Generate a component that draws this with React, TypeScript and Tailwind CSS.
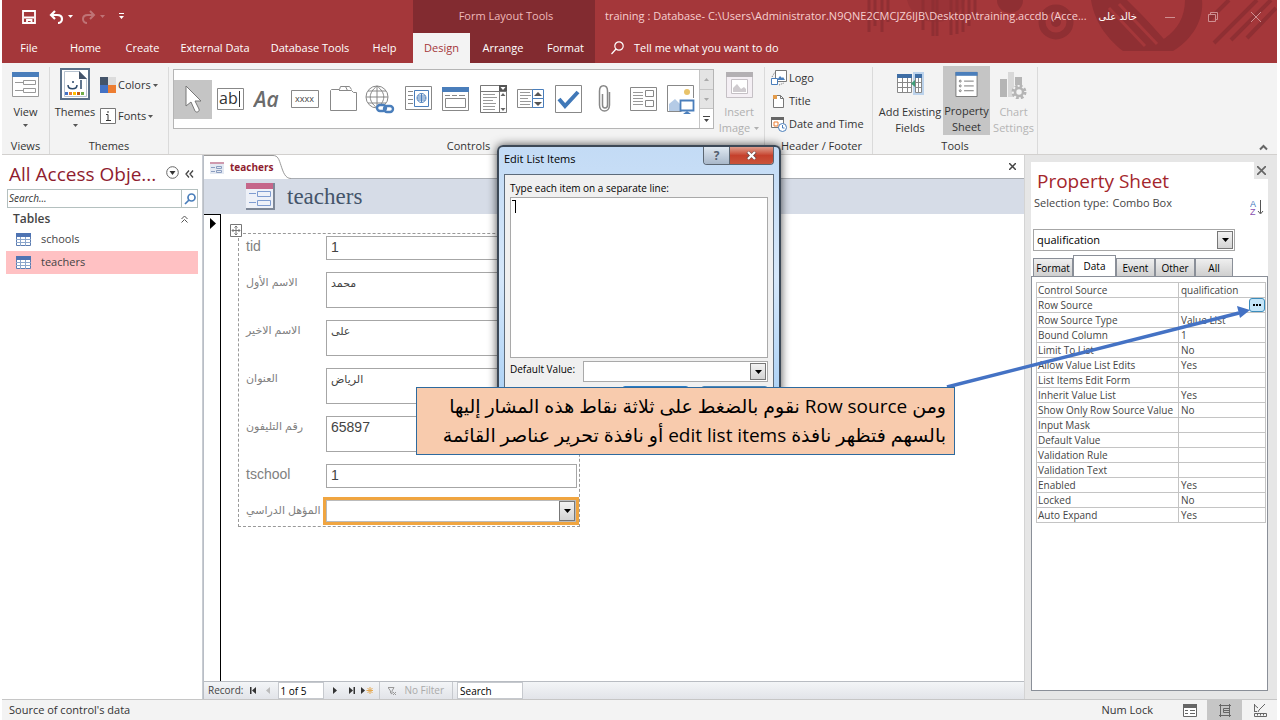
import React, { useState } from 'react';

interface Field {
  label: string;
  value: string;
  tall?: boolean;
}

const menuTabs = [
  { name: 'File', width: 'w-[54px]' },
  { name: 'Home', width: 'w-[59px]' },
  { name: 'Create', width: 'w-[55px]' },
  { name: 'External Data', width: 'w-[90px]' },
  { name: 'Database Tools', width: 'w-[100px]' },
  { name: 'Help', width: 'w-[49px]' },
];

const fields: Field[] = [
  { label: 'tid', value: '1' },
  { label: 'الاسم الأول', value: 'محمد', tall: true },
  { label: 'الاسم الاخير', value: 'على', tall: true },
  { label: 'العنوان', value: 'الرياض', tall: true },
  { label: 'رقم التليفون', value: '65897', tall: true },
  { label: 'tschool', value: '1' },
];

const properties: [string, string][] = [
  ['Control Source', 'qualification'],
  ['Row Source', ''],
  ['Row Source Type', 'Value List'],
  ['Bound Column', '1'],
  ['Limit To List', 'No'],
  ['Allow Value List Edits', 'Yes'],
  ['List Items Edit Form', ''],
  ['Inherit Value List', 'Yes'],
  ['Show Only Row Source Value', 'No'],
  ['Input Mask', ''],
  ['Default Value', ''],
  ['Validation Rule', ''],
  ['Validation Text', ''],
  ['Enabled', 'Yes'],
  ['Locked', 'No'],
  ['Auto Expand', 'Yes'],
];

const isArabic = (text: string) => /[\u0600-\u06ff]/.test(text);

const Caret: React.FC<{ className?: string }> = ({ className = 'text-[#555]' }) => (
  <svg width="5" height="3" viewBox="0 0 5 3" className={`shrink-0 ${className}`}>
    <path d="M0 0h5L2.500 3z" fill="currentColor" />
  </svg>
);

// the darker arrow inside a combo box button
const ComboArrow = () => (
  <span className="flex w-4 items-center justify-center border border-[#777] bg-linear-to-b from-[#f2f2f2] to-[#d4d4d4]">
    <svg width="7" height="4" viewBox="0 0 7 4"><path d="M0 0h7L3.500 4z" /></svg>
  </span>
);

/* ---------- title bar ---------- */

const TitlePattern = () => (
  <svg width="420" height="52" viewBox="0 0 420 52" className="absolute top-0 right-0" fill="none" stroke="#8f2f33">
    <path d="M12 0v32M18 0v26M25 0v32M31 0v22" strokeWidth="3" />
    <path d="M50 0a30 30 0 0 0 58 0z" fill="#8f2f33" stroke="none" opacity=".5" />
    <path d="M66 0v30M76 0v36M80 0v36M94 0v35M100 0v34M106 0v32M112 0v26M118 0v20" strokeWidth="3" />
    <path d="M140 0a13 13 0 0 0 26 0z" fill="#8f2f33" stroke="none" />
    <circle cx="199" cy="22" r="14" strokeWidth="7" />
    <circle cx="199" cy="22" r="5" fill="#8f2f33" stroke="none" />
    <path d="M234 0c4 24 18 40 32 51h50c20-12 31-32 29-51h-17c0 17-8 30-20 38L270 0z" fill="#8f2f33" stroke="none" />
    <path d="M252 8l36 38M262 4l38 40M274 0l34 38" stroke="#a4373a" strokeWidth="3" />
    <path d="M352 20L372 0M357 43L400 0M374 40L414 0M390 38L419 8" strokeWidth="4" />
  </svg>
);

const TitleBar = () => (
  <div className="relative flex h-[33px] items-stretch">
    <div className="flex w-[411px] shrink-0 items-center pl-5">
      <button aria-label="Save">
        <svg width="14" height="14" viewBox="0 0 14 14" fill="none" stroke="#fff" strokeWidth="1.800">
          <path d="M1 1h12v12H1zM2 7.500h10M5 12.500v-2.500h4.500v2.500" />
        </svg>
      </button>
      <button aria-label="Undo" className="ml-[13px] flex items-center gap-1">
        <svg width="15" height="14" viewBox="0 0 15 14" fill="none" stroke="#fff" strokeWidth="2.200">
          <path d="M6 1L2 5l4 4M2 5h6c3 0 5 1.500 5 4s-2 4-4 4" />
        </svg>
        <Caret className="text-white" />
      </button>
      <button aria-label="Redo" className="ml-2 flex items-center gap-1 opacity-30">
        <svg width="15" height="14" viewBox="0 0 15 14" fill="none" stroke="#fff" strokeWidth="2">
          <path d="M9 1l4 4-4 4M13 5H7C4 5 2 6.500 2 9s2 4 4 4" />
        </svg>
        <Caret className="text-white" />
      </button>
      <button aria-label="Customize toolbar" className="ml-[13px]">
        <svg width="7" height="7" viewBox="0 0 7 7" fill="#fff">
          <path d="M1 0h5v1H1zM1 3h5L3.500 6z" />
        </svg>
      </button>
    </div>
    <div className="flex w-[182px] shrink-0 items-center justify-center bg-[#822b30] pl-1 text-[#eeb9ba]">
      Form Layout Tools
    </div>
    <div className="relative flex min-w-0 flex-1 items-center text-[#f6cfd0]">
      <span className="ml-[10px] shrink-0 whitespace-nowrap">
        training : Database- C:\Users\Administrator.N9QNE2CMCJZ6IJB\Desktop\training.accdb (Acce...
      </span>
      <span className="ml-3 shrink-0 font-['DejaVu_Sans',sans-serif] text-[10px] text-white">خالد على</span>
      <div className="ml-auto flex items-center gap-[33px] pr-4">
        <button aria-label="Minimize">
          <svg width="10" height="10" viewBox="0 0 10 10" stroke="#cf8f91"><path d="M0 5.500h10" /></svg>
        </button>
        <button aria-label="Restore">
          <svg width="10" height="10" viewBox="0 0 10 10" fill="none" stroke="#cf8f91"><path d="M.5 2.500h7v7h-7zM2.500 2.500v-2h7v7h-2" /></svg>
        </button>
        <button aria-label="Close">
          <svg width="10" height="10" viewBox="0 0 10 10" stroke="#cf8f91"><path d="M0 0l10 10M10 0L0 10" /></svg>
        </button>
      </div>
    </div>
  </div>
);

const MenuTabs = () => (
  <nav className="relative flex h-[30px] items-stretch text-white">
    <div className="flex w-[411px] shrink-0">
      {menuTabs.map((tab) => (
        <button key={tab.name} className={`shrink-0 text-center whitespace-nowrap ${tab.width}`}>{tab.name}</button>
      ))}
    </div>
    <div className="flex w-[182px] shrink-0 bg-[#822b30]">
      <button className="w-[57px] bg-[#f3f3f3] text-[#a4373a]">Design</button>
      <button className="w-[66px]">Arrange</button>
      <button className="w-[59px]">Format</button>
    </div>
    <button className="ml-4 flex items-center gap-[10px]">
      <svg width="13" height="14" viewBox="0 0 13 14" fill="none" stroke="#fff" strokeWidth="1.200">
        <circle cx="8" cy="5" r="4.200" /><path d="M5 8L.5 13" />
      </svg>
      Tell me what you want to do
    </button>
  </nav>
);

/* ---------- ribbon ---------- */

const FormIcon = () => (
  <svg width="27" height="27" viewBox="0 0 27 27" fill="none">
    <path d="M.5 1.500h26v24H.5z" fill="#fff" stroke="#999" />
    <path d="M0 1h27v5H0z" fill="#4a7ebb" />
    <path d="M11.500 9.500h12v4h-12zM11.500 17.500h12v4h-12zM3 11.500h8M3 19.500h8" stroke="#999" />
  </svg>
);

const controls: { name: string; icon: React.ReactNode }[] = [
  {
    name: 'Select',
    icon: <path d="M8 2v20l5-4 4 9c1 2 5 1 4-2l-4-8h6z" fill="#fff" stroke="#777" />,
  },
  {
    name: 'Text Box',
    icon: (
      <>
        <path d="M2.500 4.500h26v21h-26z" fill="#fff" stroke="#888" />
        <text x="4" y="20" fontSize="16" fontFamily="Open Sans" fill="#333">ab</text>
        <path d="M24.500 7v16" stroke="#333" />
      </>
    ),
  },
  {
    name: 'Label',
    icon: <text x="1" y="23" fontSize="21" fontStyle="italic" fontWeight="600" fontFamily="Open Sans" fill="#6b6b6b">Aa</text>,
  },
  {
    name: 'Button',
    icon: (
      <>
        <path d="M1.500 6.500h27v17h-27z" fill="#fff" stroke="#888" />
        <text x="5" y="18" fontSize="9" fontFamily="Open Sans" fill="#444">xxxx</text>
      </>
    ),
  },
  {
    name: 'Tab Control',
    icon: <path d="M2.500 26.500v-20l1-1h8l1-3h5l2 4h4l2 2h3v18zM14.500 2.500h7l2 3M11 6.500h9" stroke="#888" fill="#fff" />,
  },
  {
    name: 'Hyperlink',
    icon: (
      <>
        <circle cx="12" cy="13" r="11" stroke="#888" fill="#fff" />
        <path d="M1 13h22M3 7h18M3 19h18M12 2v22M12 2C3 9 3 17 12 24M12 2c9 7 9 15 0 22" stroke="#888" fill="none" />
        <rect x="12" y="21" width="9" height="6" rx="3" stroke="#4a7ebb" strokeWidth="2.400" fill="#fff" />
        <rect x="19" y="22" width="9" height="6" rx="3" stroke="#4a7ebb" strokeWidth="2.400" fill="none" />
      </>
    ),
  },
  {
    name: 'Navigation Control',
    icon: (
      <>
        <path d="M2.500 2.500h26v23h-26z" fill="#fff" stroke="#888" />
        <path d="M5 7.500h5M5 11.500h5M5 15.500h5M5 19.500h5" stroke="#888" />
        <path d="M11.500 6.500h14v16h-14z" stroke="#4a7ebb" fill="#fff" />
        <circle cx="18.500" cy="14" r="4.500" stroke="#4a7ebb" fill="none" />
        <path d="M14 14h9M18.500 9.500v9M15 12h7M15 16h7" stroke="#4a7ebb" />
      </>
    ),
  },
  {
    name: 'Option Group',
    icon: (
      <>
        <path d="M2.500 3.500h26v23h-26z" fill="#fff" stroke="#888" />
        <path d="M2 3h27v5H2z" fill="#4a7ebb" />
        <path d="M5 11.500h5M12 11.500h5M19 11.500h6M5.500 14.500h20v9h-20z" stroke="#888" fill="none" />
      </>
    ),
  },
  {
    name: 'Combo Box',
    icon: (
      <>
        <path d="M2.500 1.500h26v27h-26z" fill="#fff" stroke="#777" />
        <path d="M2 7.500h27M21.500 7v21" stroke="#777" />
        <path d="M21 1h8v6h-8z" fill="#555" />
        <path d="M22.500 3h5L25 6z" fill="#fff" />
        <path d="M22.500 12h5L25 9zM22.500 24h5L25 27z" fill="#666" />
        <path d="M5 10.500h12M5 13.500h14M5 16.500h10M5 19.500h13M5 22.500h12M5 25.500h12" stroke="#999" />
      </>
    ),
  },
  {
    name: 'List Box',
    icon: (
      <>
        <path d="M2.500 5.500h16v18h-16z" fill="#fff" stroke="#888" />
        <path d="M5 8.500h10M5 11.500h11M5 14.500h8M5 17.500h11M5 20.500h10" stroke="#999" />
        <path d="M17.500 5.500h11v9h-11zM17.500 14.500h11v9h-11z" fill="#fff" stroke="#4a7ebb" />
        <path d="M19 12h8l-4-4zM19 18h8l-4 4z" fill="#555" />
      </>
    ),
  },
  {
    name: 'Check Box',
    icon: (
      <>
        <path d="M2.500 1.500h26v27h-26z" fill="#fff" stroke="#888" />
        <path d="M6 15l6 7L25 8" stroke="#4078b8" strokeWidth="4" fill="none" />
      </>
    ),
  },
  {
    name: 'Attachment',
    icon: <path d="M19.500 8v13c0 8-10 8-10 0V7c0-7 8-7 8 0v14c0 4-5 4-5 0V10" stroke="#888" strokeWidth="1.500" fill="none" />,
  },
  {
    name: 'Subform',
    icon: (
      <>
        <path d="M2.500 3.500h26v23h-26z" fill="#fff" stroke="#888" />
        <path d="M5 8.500h10M5 11.500h10M5 14.500h10M5 17.500h10M5 20.500h10" stroke="#999" />
        <path d="M17.500 6.500h8v6h-8zM17.500 16.500h8v6h-8z" stroke="#888" fill="none" />
      </>
    ),
  },
  {
    name: 'Image',
    icon: (
      <>
        <path d="M28.500 14v-12.500h-26v26h14" fill="#fff" stroke="#888" />
        <circle cx="22" cy="8" r="3" fill="#e8c36a" />
        <path d="M4 27V20l6-5 6 6v6z" fill="#b5cbe6" />
        <path d="M15.500 16.500h13v10h-13z" fill="#fff" stroke="#4a7ebb" strokeWidth="1.800" />
        <path d="M18 30h8l-4-3z" fill="#4a7ebb" />
      </>
    ),
  },
];

const GroupLabel: React.FC<{ children: React.ReactNode }> = ({ children }) => (
  <div className="mt-auto pb-[1px] text-center leading-[14px]">{children}</div>
);

const Ribbon = () => (
  <div className="flex h-[92px] shrink-0 items-stretch border-b border-[#d2d0ce] bg-[#f3f3f3] pt-1 leading-4 text-[#333]">
    <section className="flex w-[48px] shrink-0 flex-col border-r border-[#dadada]">
      <button className="flex flex-col items-center pt-1">
        <FormIcon />
        <span className="mt-[6px]">View</span>
        <span className="mt-1"><Caret /></span>
      </button>
      <GroupLabel>Views</GroupLabel>
    </section>

    <section className="flex w-[119px] shrink-0 flex-col border-r border-[#dadada]">
      <div className="flex">
        <button className="flex w-[50px] flex-col items-center pt-[1px]">
          <svg width="30" height="32" viewBox="0 0 30 32">
            <path d="M1 1h28v30H1z" fill="#fff" stroke="#5a7088" strokeWidth="2" />
            <path d="M4.500 3.500h15l7 7v18h-22z" fill="#fff" stroke="#b7c3d0" />
            <path d="M19 3l8 8h-8z" fill="#44546a" />
            <path d="M21 12v9M8 17c0 5 9 5 9 0M12 14h2" stroke="#2e4a6b" strokeWidth="1.500" fill="none" />
            <path d="M5 24h3v3H5z" fill="#4472c4" /><path d="M9 24h3v3H9z" fill="#ed7d31" />
            <path d="M13 24h3v3h-3z" fill="#ffc000" /><path d="M17 24h3v3h-3z" fill="#c55a11" />
            <path d="M21 24h3v3h-3z" fill="#70ad47" />
          </svg>
          <span className="mt-1">Themes</span>
          <span className="mt-1"><Caret /></span>
        </button>
        <div className="flex flex-col gap-[15px] pt-[10px]">
          <button className="flex items-center gap-[2px]">
            <svg width="16" height="16" viewBox="0 0 16 16">
              <path d="M0 0h8v8H0z" fill="#44546a" /><path d="M8 0h8v8H8z" fill="#dcdcdc" />
              <path d="M0 8h8v8H0z" fill="#4472c4" /><path d="M8 8h8v8H8z" fill="#ed7d31" />
            </svg>
            Colors <Caret />
          </button>
          <button className="flex items-center gap-[2px]">
            <svg width="16" height="16" viewBox="0 0 16 16" fill="none" stroke="#777">
              <path d="M.5 .5h15v15H.5z" fill="#fff" />
              <path d="M6 6.500h2v6M6 12.500h5M8 3v2" stroke="#333" />
            </svg>
            Fonts <Caret />
          </button>
        </div>
      </div>
      <GroupLabel>Themes</GroupLabel>
    </section>

    <section className="flex w-[596px] shrink-0 flex-col border-r border-[#dadada] pl-1">
      <div className="flex">
        <div className="mt-[2px] flex h-[60px] w-[541px] border border-[#b5b5b5] bg-white">
          <div className="flex flex-1 items-center">
            {controls.map((control, i) => (
              <button
                key={control.name}
                aria-label={control.name}
                className={`flex h-[39px] flex-1 items-center justify-center ${i === 0 ? 'bg-[#c5c5c5]' : ''}`}
              >
                <svg width="30" height="30" viewBox="0 0 30 30">{control.icon}</svg>
              </button>
            ))}
          </div>
          <div className="flex w-[14px] flex-col border-l border-[#c5c5c5]">
            <button aria-label="Scroll up" className="flex flex-1 items-center justify-center border-b border-[#c5c5c5] bg-[#e4e4e4]">
              <svg width="5" height="3" viewBox="0 0 5 3" fill="#aaa"><path d="M0 3h5L2.500 0z" /></svg>
            </button>
            <button aria-label="Scroll down" className="flex flex-1 items-center justify-center border-b border-[#c5c5c5] bg-[#e4e4e4]">
              <Caret className="text-[#aaa]" />
            </button>
            <button aria-label="More controls" className="flex flex-1 items-center justify-center">
              <svg width="7" height="6" viewBox="0 0 7 6" fill="#444"><path d="M0 0h7v1H0zM1 3h5L3.500 6z" /></svg>
            </button>
          </div>
        </div>
        <button className="flex flex-1 flex-col items-center pt-[5px] text-[#b0b0b0]">
          <svg width="27" height="26" viewBox="0 0 27 26" fill="none">
            <path d="M.5 .5h26v25H.5z" fill="#f4eff4" stroke="#c5c0c5" />
            <path d="M0 0h27v5H0z" fill="#b3b0b3" />
            <path d="M5.500 7.500h16v14h-16z" stroke="#c5c0c5" fill="#fff" />
            <path d="M7 20v-4l4-4 4 5 3-2 2 2v3z" fill="#cfcbcf" />
          </svg>
          <span className="mt-[6px]">Insert</span>
          <span className="flex items-center gap-1">Image <Caret className="text-[#b0b0b0]" /></span>
        </button>
      </div>
      <GroupLabel>Controls</GroupLabel>
    </section>

    <section className="flex w-[108px] shrink-0 flex-col border-r border-[#dadada] pl-[6px]">
      <div className="flex flex-col gap-[7px] pt-[3px] whitespace-nowrap">
        <button className="flex items-center gap-[2px]">
          <svg width="16" height="16" viewBox="0 0 16 16" fill="none" stroke="#777">
            <path d="M4.500 .5h11v11h-11z" fill="#fff" /><path d="M.5 8.500h6v6h-6z" fill="#fff" stroke="#4a7ebb" />
            <path d="M6 10l3-4 2 2 1-1 2 3z" fill="#4a7ebb" stroke="none" /><path d="M1 7l3-5M8 15l5-2" strokeDasharray="1 1" />
          </svg>
          Logo
        </button>
        <button className="flex items-center gap-[2px]">
          <svg width="16" height="16" viewBox="0 0 16 16" fill="none" stroke="#777">
            <path d="M2.500 2.500h7l3 3v9h-10z" fill="#fff" /><path d="M9.500 2.500v3h3" /><path d="M2 2h4v4H2z" fill="#e39b4a" stroke="none" />
          </svg>
          Title
        </button>
        <button className="flex items-center gap-[2px]">
          <svg width="16" height="16" viewBox="0 0 16 16" fill="none" stroke="#777">
            <path d="M.5 1.500h12v10H.5z" fill="#fff" /><path d="M0 1h13v3H0z" fill="#666" stroke="none" />
            <path d="M3 6h4v4H3z" stroke="#ed7d31" /><circle cx="11.500" cy="11.500" r="4" fill="#fff" stroke="#4a7ebb" />
            <path d="M11.500 9v3h2" stroke="#4a7ebb" />
          </svg>
          Date and Time
        </button>
      </div>
      <GroupLabel>Header / Footer</GroupLabel>
    </section>

    <section className="flex w-[165px] shrink-0 flex-col border-r border-[#dadada]">
      <div className="flex">
        <button className="flex w-[70px] flex-col items-center pt-1 pl-1 whitespace-nowrap">
          <svg width="27" height="27" viewBox="0 0 27 27" fill="none" stroke="#888">
            <path d="M16 1h11v23H16z" fill="#bcd3ec" stroke="none" />
            <path d="M.5 3.500h14v18H.5zM18.500 3.500h6v18h-6z" fill="#fff" />
            <path d="M0 3h15v4H0zM18 3h7v4h-7z" fill="#3f6ea5" stroke="none" />
            <path d="M0 11.500h15M0 16.500h15M5.500 7v14M10.500 7v14M18 11.500h7M18 16.500h7M21.500 7v14" />
            <path d="M18 9v7l-4-3.500z" fill="#3f9d78" stroke="none" />
          </svg>
          <span className="mt-[6px]">Add Existing</span>
          <span>Fields</span>
        </button>
        <button className="-mt-[1px] flex h-[69px] w-[47px] flex-col items-center bg-[#c5c5c5] pt-[5px]">
          <svg width="23" height="27" viewBox="0 0 23 27" fill="none" stroke="#777">
            <path d="M.5 1.500h22v25H.5z" fill="#fff" /><path d="M0 1h23v4H0z" fill="#4a7ebb" stroke="none" />
            <path d="M9 10.500h10M9 15.500h10M9 20.500h10" /><circle cx="5" cy="10.500" r="1" /><circle cx="5" cy="15.500" r="1" /><circle cx="5" cy="20.500" r="1" />
          </svg>
          <span className="mt-[6px]">Property</span>
          <span>Sheet</span>
        </button>
        <button className="flex flex-1 flex-col items-center pt-1 text-[#b5b5b5]">
          <svg width="27" height="28" viewBox="0 0 27 28" fill="#b5b5b5">
            <path d="M0 8h7v18H0z" /><path d="M8 1h6v25H8z" fill="#d8d8d8" /><path d="M15 6h7v8h-7z" />
            <circle cx="19" cy="21" r="7" fill="#f3f3f3" />
            <circle cx="19" cy="21" r="4" fill="none" stroke="#b5b5b5" strokeWidth="2.500" />
            <circle cx="19" cy="21" r="6" fill="none" stroke="#b5b5b5" strokeWidth="3" strokeDasharray="2.700 2" />
          </svg>
          <span className="mt-[5px]">Chart</span>
          <span>Settings</span>
        </button>
      </div>
      <GroupLabel>Tools</GroupLabel>
    </section>
    <button aria-label="Collapse the ribbon" className="mt-auto mr-[9px] mb-[2px] ml-auto">
      <svg width="9" height="9" viewBox="0 0 9 9" fill="none" stroke="#666" strokeWidth="2"><path d="M1 6.500l3.500-3.500L8 6.500" /></svg>
    </button>
  </div>
);

/* ---------- navigation pane ---------- */

const TableIcon = () => (
  <svg width="15" height="13" viewBox="0 0 15 13" fill="none" stroke="#8ba6cc">
    <path d="M.5 .5h14v12H.5z" fill="#fff" stroke="#5b7bb0" />
    <path d="M0 0h15v4H0z" fill="#4f74b3" stroke="none" />
    <path d="M0 6.500h15M0 9.500h15M4.500 4v9M9.500 4v9" />
  </svg>
);

const NavigationPane = () => {
  const [selected, setSelected] = useState('teachers');

  return (
    <aside className="w-[201px] shrink-0 border-r border-[#c8ccd2] bg-white pt-[6px] pr-1 pl-1 text-[#444]">
      <div className="flex h-[26px] items-center pl-[3px]">
        <h1 className="text-[19px] leading-6 whitespace-nowrap text-[#8f1d2f]">All Access Obje...</h1>
        <button aria-label="Object filter" className="ml-auto pb-1">
          <svg width="13" height="13" viewBox="0 0 13 13" fill="none" stroke="#666"><circle cx="6.500" cy="6.500" r="5.800" /><path d="M3.500 5h6l-3 4z" fill="#333" stroke="none" /></svg>
        </button>
        <button aria-label="Collapse pane" className="mr-1 ml-[6px]">
          <svg width="9" height="8" viewBox="0 0 9 8" fill="none" stroke="#444" strokeWidth="1.300"><path d="M4 .5L1 4l3 3.500M8 .5L5 4l3 3.500" /></svg>
        </button>
      </div>
      <div className="mt-[2px] ml-[1px] flex h-[19px] border border-[#b4c0bf]">
        <input aria-label="Search objects" placeholder="Search..." className="min-w-0 flex-1 px-[1px] text-[10px] italic outline-none placeholder:text-[#333]" />
        <button aria-label="Search" className="flex w-4 items-center justify-center border-l border-[#b4c0bf]">
          <svg width="12" height="12" viewBox="0 0 12 12" fill="none" stroke="#4a7ebb" strokeWidth="1.700"><circle cx="7.500" cy="4.500" r="3.500" /><path d="M5 7l-4 4" /></svg>
        </button>
      </div>
      <div className="flex h-[20px] items-center justify-between pt-[2px] pr-[10px] pl-[7px] text-xs font-semibold">
        Tables
        <svg width="7" height="8" viewBox="0 0 7 8" fill="none" stroke="#555"><path d="M.5 4l3-3 3 3M.5 7.500l3-3 3 3" /></svg>
      </div>
      {['schools', 'teachers'].map((name) => (
        <button
          key={name}
          onClick={() => setSelected(name)}
          className={`flex h-[23px] w-full items-center gap-[10px] pl-[10px] ${selected === name ? 'bg-[#ffc1c3]' : ''}`}
        >
          <TableIcon />
          {name}
        </button>
      ))}
    </aside>
  );
};

/* ---------- form ---------- */

const FormView = () => (
  <main className="flex min-w-0 flex-1 flex-col border-l border-[#b9bec6] bg-white">
    <div className="flex h-6 items-stretch">
      <button className="flex items-center gap-[6px] border-t border-[#999] pl-[6px] text-[10px] font-bold text-[#8f1d2f]">
        <svg width="14" height="12" viewBox="0 0 14 12" fill="none" stroke="#8a9dc0"><path d="M0 0h14v12H0z" fill="#e4e9f2" stroke="none" /><path d="M0 0h14v2H0z" fill="#cf9aae" stroke="none" /><path d="M6.500 4.500h5v2h-5zM6.500 8.500h5v2h-5zM1 5.500h4M1 9.500h4" /></svg>
        teachers
      </button>
      <svg width="18" height="24" viewBox="0 0 18 24" fill="none" stroke="#999"><path d="M0 .5c5 0 6 4 8 10s4 13 10 13" /></svg>
      <div className="flex flex-1 items-center justify-end border-b border-[#a9adb3] pr-2">
        <button aria-label="Close form">
          <svg width="7" height="7" viewBox="0 0 7 7" stroke="#444" strokeWidth="1.500"><path d="M0 0l7 7M7 0L0 7" /></svg>
        </button>
      </div>
    </div>
    <header className="flex h-[35px] shrink-0 items-center gap-3 bg-[#d6dce7] pl-[42px]">
      <svg width="29" height="27" viewBox="0 0 29 27" fill="none" stroke="#7f9cd0">
        <path d="M0 0h29v27H0z" fill="#7d8797" stroke="none" /><path d="M0 0h27v25H0z" fill="#eef1f8" stroke="none" />
        <path d="M0 0h27v6H0z" fill="#c5668a" stroke="none" /><path d="M11.500 8.500h13v5h-13zM11.500 17.500h13v5h-13zM3 10.500h7M3 19.500h7" />
      </svg>
      <h2 className="font-['Liberation_Serif',serif] text-[23px] leading-6 text-[#44546a]">teachers</h2>
    </header>
    <div className="flex flex-1">
      <div className="w-[17px] shrink-0 border-t border-r border-black pt-[3px] pl-[6px]">
        <svg width="6" height="11" viewBox="0 0 6 11"><path d="M0 0l6 5.500L0 11z" /></svg>
      </div>
      <div className="pt-[19px] pl-[17px]">
        <form className="relative flex w-[342px] flex-col gap-3 border border-dashed border-[#999] pt-[2px] pb-1 pl-[7px] font-['Liberation_Sans','DejaVu_Sans',sans-serif] text-[14px] text-[#808080]">
          <svg width="12" height="13" viewBox="0 0 12 13" className="absolute -top-[10px] -left-[9px]" fill="none" stroke="#777">
            <path d="M.5 .5h11v12H.5z" fill="#fff" /><path d="M6 2v9M2 6.500h8M4.500 3.500L6 2l1.500 1.500M4.500 9.500L6 11l1.500-1.500M3.500 5L2 6.500 3.500 8M8.500 5L10 6.500 8.500 8" />
          </svg>
          {fields.map((field) => (
            <label key={field.label} className="flex items-start">
              <span className={`w-20 shrink-0 leading-[20px] whitespace-nowrap ${isArabic(field.label) ? 'text-[11px]' : ''}`}>{field.label}</span>
              <span className={`w-[251px] border border-[#a6a6a6] ${field.tall ? 'h-9' : 'h-6'}`}>
                <input
                  defaultValue={field.value}
                  className={`block h-[21px] w-full px-1 text-[#444] outline-none ${isArabic(field.value) ? 'text-[11px]' : ''}`}
                />
              </span>
            </label>
          ))}
          <div className="flex items-start">
            <label htmlFor="degree" className="w-20 shrink-0 text-[11px] leading-[20px] whitespace-nowrap">المؤهل الدراسي</label>
            <div className="flex h-[22px] w-[250px] border border-[#bbb] outline-3 outline-[#f0a540]">
              <select id="degree" className="min-w-0 flex-1 appearance-none outline-none"><option></option></select>
              <ComboArrow />
            </div>
          </div>
        </form>
      </div>
    </div>
    <footer className="flex h-[18px] shrink-0 items-center border-t border-[#b8bcc2] bg-linear-to-b from-[#f3f5f7] to-[#e2e4e9] pl-1 text-[10px] text-[#444]">
      Record:
      <button aria-label="First record" className="ml-[7px]"><svg width="7" height="7" viewBox="0 0 7 7" fill="#333"><path d="M0 0h1.500v7H0zM6 0v7L2 3.500z" /></svg></button>
      <button aria-label="Previous record" className="mr-[7px] ml-[9px]"><svg width="5" height="7" viewBox="0 0 5 7" fill="#bbb"><path d="M4 0v7L0 3.500z" /></svg></button>
      <input aria-label="Current record" defaultValue="1 of 5" className="h-[17px] w-[46px] border border-[#c6c9ce] bg-white px-[1px] text-black" />
      <button aria-label="Next record" className="ml-[9px]"><svg width="5" height="7" viewBox="0 0 5 7" fill="#333"><path d="M0 0v7l4-3.500z" /></svg></button>
      <button aria-label="Last record" className="ml-[10px]"><svg width="7" height="7" viewBox="0 0 7 7" fill="#333"><path d="M5.500 0H7v7H5.500zM1 0v7l4-3.500z" /></svg></button>
      <button aria-label="New record" className="ml-[6px]">
        <svg width="12" height="7" viewBox="0 0 12 7" fill="#333"><path d="M0 0v7l4-3.500z" /><path d="M9 0v7M5.500 3.500h7M6.500 1l5 5M11.500 1l-5 5" stroke="#e5a850" /></svg>
      </button>
      <button disabled className="ml-[6px] flex h-full items-center gap-2 border-x border-[#c6c9ce] px-2 text-[#aaa]">
        <svg width="8" height="8" viewBox="0 0 8 8" fill="none" stroke="#999"><path d="M0 .5h6L4 4v3L2.500 6V4zM5 5l3 3M8 5L5 8" /></svg>
        No Filter
      </button>
      <input aria-label="Search records" defaultValue="Search" className="ml-1 h-[17px] w-[66px] border border-[#c6c9ce] bg-white px-[2px] text-black" />
    </footer>
  </main>
);

/* ---------- property sheet ---------- */

const PropertySheet = () => {
  const [tab, setTab] = useState('Data');
  const tabs = [
    { name: 'Format', width: 'w-[40px]' },
    { name: 'Data', width: 'w-[43px]' },
    { name: 'Event', width: 'w-[39px]' },
    { name: 'Other', width: 'w-[40px]' },
    { name: 'All', width: 'w-[38px]' },
  ];

  return (
    <aside className="flex w-[253px] shrink-0 flex-col border-l border-[#d4d4d4] bg-[#e6e6e6] pt-[7px] pr-[9px] pb-2 pl-[6px] text-[#444]">
      <div className="flex flex-1 flex-col bg-white">
        <div className="flex h-8 items-start">
          <h2 className="mt-1 ml-[6px] text-[19px] leading-[31px] text-[#a4262c]">Property Sheet</h2>
          <button aria-label="Close property sheet" className="ml-auto flex h-[17px] w-[14px] items-center justify-center bg-[#e6e6e6]">
            <svg width="9" height="9" viewBox="0 0 9 9" stroke="#666" strokeWidth="1.700"><path d="M0 0l9 9M9 0L0 9" /></svg>
          </button>
        </div>
        <div className="flex h-[35px] items-start pl-[3px] leading-[18px]">
          <span>Selection type:</span>
          <span className="ml-1">Combo Box</span>
          <button aria-label="Sort" className="mt-[5px] mr-1 ml-auto">
            <svg width="14" height="18" viewBox="0 0 14 18">
              <text x="0" y="8" fontSize="9" fontFamily="Liberation Sans" fill="#3f78c0">A</text>
              <text x="0" y="16" fontSize="9" fontFamily="Liberation Sans" fill="#8a4fb0">Z</text>
              <path d="M10.500 1v13M8 12l2.500 3 2.500-3" stroke="#555" fill="none" />
            </svg>
          </button>
        </div>
        <div className="ml-[2px] flex h-[22px] w-[202px] border border-[#a6a6a6] p-[1px]">
          <select aria-label="Selected control" className="min-w-0 flex-1 appearance-none px-[2px] text-black outline-none">
            <option>qualification</option>
          </select>
          <ComboArrow />
        </div>
        <div className="mt-1 ml-[2px] flex h-[21px] items-end" role="tablist">
          {tabs.map(({ name, width }) => (
            <button
              key={name}
              role="tab"
              aria-selected={tab === name}
              onClick={() => setTab(name)}
              className={`border border-b-0 border-[#8a8f98] text-[10px] leading-4 text-black ${width} ${
                tab === name ? 'h-[21px] bg-white' : 'h-[18px] bg-linear-to-b from-[#efefef] to-[#cfcfcf]'
              }`}
            >
              {name}
            </button>
          ))}
        </div>
        <div className="flex-1 border border-[#8a8f98] pt-[5px] pr-[1px] pl-1">
          <table className="w-full table-fixed border-collapse text-[10px] leading-[14px]">
            <tbody>
              {properties.map(([name, value]) => (
                <tr key={name} className="h-[15px]">
                  <th scope="row" className="w-[142px] border border-[#c4c4c4] p-0 pl-[1px] text-left font-normal whitespace-nowrap">{name}</th>
                  <td className="border border-[#c4c4c4] p-0 pl-[2px] whitespace-nowrap">
                    {name === 'Row Source' ? (
                      <button aria-label="Build" className="ml-auto flex h-[14px] w-4 items-center justify-center rounded-[3px] border border-[#3c8dbc] bg-[#c5e5f8]">
                        <svg width="8" height="2" viewBox="0 0 8 2"><path d="M0 0h2v2H0zM3 0h2v2H3zM6 0h2v2H6z" /></svg>
                      </button>
                    ) : value}
                  </td>
                </tr>
              ))}
            </tbody>
          </table>
        </div>
      </div>
    </aside>
  );
};

/* ---------- overlays ---------- */

const EditListDialog = () => (
  <div
    role="dialog"
    aria-label="Edit List Items"
    className="absolute -top-[10px] left-[495px] flex h-[262px] w-[284px] flex-col rounded-t-[6px] border-2 border-b-0 border-[#3c4856] bg-linear-to-b from-[#c3dbf5] via-[#d5e7fa] to-[#a9d0f5] px-[5px] text-[10px] text-black shadow-[0_0_10px_rgba(0,0,0,0.7)]"
  >
    <div className="flex h-[27px] shrink-0 items-start">
      <span className="text-[11px] leading-6">Edit List Items</span>
      <div className="ml-auto flex h-[18px] overflow-hidden rounded-b-[4px] border border-t-0 border-[#5b6672]">
        <button aria-label="Help" className="w-[26px] border-r border-[#5b6672] bg-linear-to-b from-[#dfe8f1] to-[#a9b8ca] text-xs leading-4 font-bold text-[#53606e]">?</button>
        <button aria-label="Close" className="flex w-[43px] items-center justify-center bg-linear-to-b from-[#dd9c8c] via-[#c5402c] to-[#c9533a]">
          <svg width="11" height="9" viewBox="0 0 11 9" fill="none"><path d="M1.500 1l8 7M9.500 1l-8 7" stroke="#6d4a48" strokeWidth="3.500" /><path d="M2 1l7 7M9 1L2 8" stroke="#fff" strokeWidth="2.200" /></svg>
        </button>
      </div>
    </div>
    <div className="flex min-h-0 flex-1 flex-col border border-b-0 border-[#5d6b7a] bg-[#f0f0f0] px-[5px] pt-[5px]">
      <label htmlFor="items" className="leading-4">Type each item on a separate line:</label>
      <div className="relative mt-[1px] h-[161px] shrink-0">
        <textarea id="items" className="block h-full w-full resize-none border border-[#a9a9a9] bg-white outline-none" />
        <svg width="4" height="13" viewBox="0 0 4 13" className="absolute top-[3px] left-[2px]" fill="none" stroke="#000"><path d="M0 .5h3.500M3.500 0v13" /></svg>
      </div>
      <div className="mt-[3px] flex">
        <label htmlFor="default" className="w-[73px] leading-4 whitespace-nowrap">Default Value:</label>
        <div className="flex h-[21px] flex-1 border border-[#a9a9a9] bg-white p-[1px]">
          <select id="default" className="min-w-0 flex-1 appearance-none outline-none"><option></option></select>
          <ComboArrow />
        </div>
      </div>
      <div className="mt-1 flex justify-end gap-3">
        <button aria-label="OK" className="h-5 w-[67px] rounded-t-[3px] border border-[#2b7cc4] bg-[#d8ecfb]" />
        <button aria-label="Cancel" className="h-5 w-[67px] rounded-t-[3px] border border-[#4b86b8] bg-[#d8ecfb]" />
      </div>
    </div>
  </div>
);

const Callout = () => (
  <>
    <svg width="306" height="84" viewBox="0 0 306 84" className="absolute top-[149px] right-[25px]">
      <path d="M1 83L293 9" stroke="#4472c4" strokeWidth="3.500" />
      <path d="M304 6l-13-4 3 12z" fill="#4472c4" />
    </svg>
    <p
      dir="rtl"
      className="absolute top-[232px] left-[414px] w-[539px] border border-[#2e6a9e] bg-[#f8cbad] px-2 py-1 font-['Open_Sans','DejaVu_Sans',sans-serif] text-[19px] leading-[29px] whitespace-nowrap text-black"
    >
      ومن Row source نقوم بالضغط على ثلاثة نقاط هذه المشار إليها
      <br />
      بالسهم فتظهر نافذة edit list items أو نافذة تحرير عناصر القائمة
    </p>
  </>
);

const StatusBar = () => (
  <div className="flex h-[21px] shrink-0 items-center border-t border-[#c6c6c6] bg-[#f3f3f3] pl-[7px] text-[#333]">
    Source of control's data
    <span className="mr-5 ml-auto">Num Lock</span>
    <button aria-label="Form view" className="flex h-full w-[34px] items-center justify-center">
      <svg width="14" height="13" viewBox="0 0 14 13" fill="none" stroke="#666"><path d="M.5 .5h13v12H.5z" fill="#fff" /><path d="M0 0h14v4H0z" fill="#666" stroke="none" /><path d="M2 6.500h3M2 9.500h3M7 6.500h5M7 9.500h5" /></svg>
    </button>
    <button aria-label="Layout view" className="flex h-full w-[35px] items-center justify-center bg-[#c6c6c6]">
      <svg width="12" height="13" viewBox="0 0 12 13" fill="none" stroke="#666"><path d="M1.500 0v13M10.500 0v13M0 1.500h12M0 11.500h12M4.500 4.500h6v2h-6zM4.500 6.500h6v2h-6z" /></svg>
    </button>
    <button aria-label="Design view" className="flex h-full w-[35px] items-center justify-center">
      <svg width="14" height="13" viewBox="0 0 14 13" fill="none" stroke="#666"><path d="M1.500 0v8M1 .5L5 4M1 7.500h3M12 0L6 6l-1 2M1.500 9.500h12v3h-12zM4.500 10v1.500M7.500 10v1.500M10.500 10v1.500" /></svg>
    </button>
  </div>
);

const App: React.FC = () => {
  return (
    <div className="flex min-h-screen flex-col bg-white pr-[3px] pl-[2px] font-['Open_Sans','DejaVu_Sans',sans-serif] text-[11px]">
      <header className="relative shrink-0 bg-[#a4373a]">
        <TitlePattern />
        <TitleBar />
        <MenuTabs />
      </header>
      <Ribbon />
      <div className="relative flex flex-1 items-stretch">
        <NavigationPane />
        <FormView />
        <PropertySheet />
        <EditListDialog />
        <Callout />
      </div>
      <StatusBar />
    </div>
  );
};

export default App;
